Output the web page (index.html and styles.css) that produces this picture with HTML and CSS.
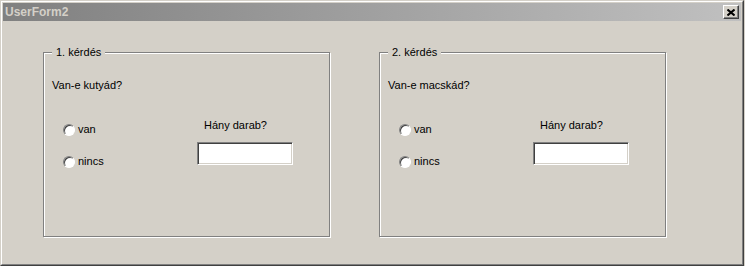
FILE: index.html
```html
<html>
    <head>
        <title>UserForm2</title>
        <link rel="stylesheet" href="styles.css">
    </head>
    <body>
        <div class="window">
            <div class="inner">
                <div class="titlebar">
                    <span class="caption-text">UserForm2</span>
                    <div class="close">
                        <svg width="8" height="7" viewBox="0 0 8 7">
                            <path d="M0.5 0.5 L7.5 6.5 M7.5 0.5 L0.5 6.5" stroke="#000" stroke-width="2" fill="none" />
                        </svg>
                    </div>
                </div>
                <div class="client">
                    <div class="frame">
                        <div class="legend">1. kérdés</div>
                        <div class="question">Van-e kutyád?</div>
                        <div class="body">
                            <div class="options">
                                <div class="option"><span class="radio"></span>van</div>
                                <div class="option"><span class="radio"></span>nincs</div>
                            </div>
                            <div class="count">
                                <div class="count-label">Hány darab?</div>
                                <div class="textbox"></div>
                            </div>
                        </div>
                    </div>
                    <div class="frame">
                        <div class="legend">2. kérdés</div>
                        <div class="question">Van-e macskád?</div>
                        <div class="body">
                            <div class="options">
                                <div class="option"><span class="radio"></span>van</div>
                                <div class="option"><span class="radio"></span>nincs</div>
                            </div>
                            <div class="count">
                                <div class="count-label">Hány darab?</div>
                                <div class="textbox"></div>
                            </div>
                        </div>
                    </div>
                </div>
            </div>
        </div>
    </body>
</html>
```

FILE: styles.css
```css
body {
    margin: 0;
    background-color: #d4d0c8;
    font-family: "Liberation Sans", Arial, sans-serif;
    font-size: 11px;
    line-height: 13px;
    color: #000;
}

.window {
    width: 744px;
    height: 266px;
    box-sizing: border-box;
    border: 1px solid;
    border-color: #d4d0c8 #404040 #404040 #d4d0c8;
}

.inner {
    height: 100%;
    box-sizing: border-box;
    border: 1px solid;
    border-color: #fff #808080 #808080 #fff;
    padding: 1px;
}

.titlebar {
    height: 18px;
    display: flex;
    align-items: flex-start;
    justify-content: space-between;
    background: linear-gradient(to right, #808080, #c0c0c0);
}

.caption-text {
    font-weight: bold;
    font-size: 12px;
    line-height: 18px;
    color: #d4d0c8;
    padding-left: 2px;
}

.close {
    width: 16px;
    height: 14px;
    margin: 2px 2px 0 0;
    box-sizing: border-box;
    background-color: #d4d0c8;
    border: 1px solid;
    border-color: #fff #404040 #404040 #fff;
    box-shadow: inset -1px -1px 0 #808080;
    display: flex;
    align-items: center;
    justify-content: center;
}

.client {
    display: flex;
    gap: 49px;
    padding: 31px 0 0 40px;
}

.frame {
    width: 287px;
    height: 185px;
    box-sizing: border-box;
    border: 1px solid #808080;
    box-shadow: inset 1px 1px 0 #fff, 1px 1px 0 #fff;
    padding-left: 8px;
}

.legend {
    display: inline-block;
    margin: -7px 0 0 0;
    padding: 0 4px;
    background-color: #d4d0c8;
}

.question {
    margin-top: 20px;
}

.body {
    display: flex;
    margin-top: 27px;
}

.options {
    width: 145px;
    padding: 4px 0 0 11px;
    box-sizing: border-box;
}

.option {
    display: flex;
    align-items: center;
    gap: 3px;
    height: 13px;
}

.option + .option {
    margin-top: 19px;
}

.radio {
    width: 12px;
    height: 12px;
    box-sizing: border-box;
    border-radius: 50%;
    border: 1px solid;
    border-color: #808080 #fff #fff #808080;
    background-color: #fff;
    box-shadow: inset 1px 1px 0 #404040;
}

.count-label {
    padding-left: 7px;
}

.textbox {
    width: 96px;
    height: 23px;
    margin-top: 10px;
    box-sizing: border-box;
    background-color: #fff;
    border: 1px solid;
    border-color: #808080 #fff #fff #808080;
    box-shadow: inset 1px 1px 0 #404040, inset -1px -1px 0 #d4d0c8;
}
```
